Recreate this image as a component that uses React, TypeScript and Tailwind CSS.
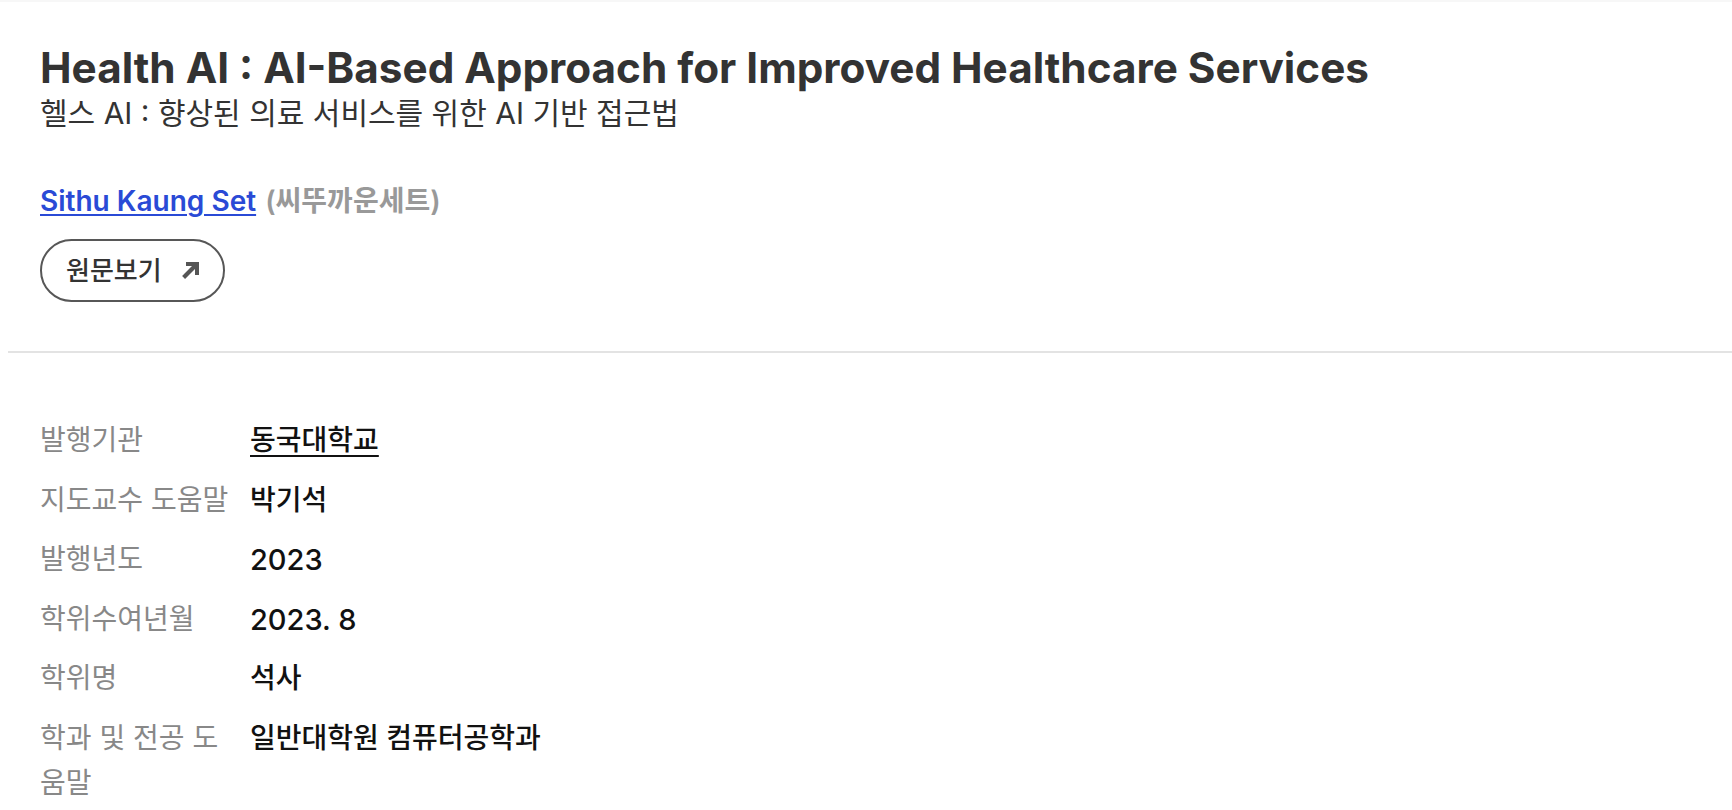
import React from "react";

const FONT = "font-['Inter','Noto_Sans_CJK_KR',sans-serif]";

function ArrowIcon() {
  return (
    <svg width="17" height="17" viewBox="0 0 17 17" fill="none" aria-hidden="true">
      <path d="M4 0H17V13H13V4H4Z" fill="#555" />
      <path d="M1.6 15.4L14.2 2.8" stroke="#555" strokeWidth="4.2" />
    </svg>
  );
}

const rows: { label: string; value: string; cls?: string; underline?: boolean }[] = [
  { label: "발행기관", value: "동국대학교", underline: true },
  { label: "지도교수 도움말", value: "박기석" },
  { label: "발행년도", value: "2023", cls: "text-[29px]" },
  { label: "학위수여년월", value: "2023. 8", cls: "text-[29px]" },
  { label: "학위명", value: "석사" },
  { label: "학과 및 전공 도움말", value: "일반대학원 컴퓨터공학과" },
];

export default function App() {
  return (
    <div className={`min-h-screen bg-white ${FONT}`}>
      <div className="h-[2px] bg-[#f7f7f7]" />
      <div className="pl-[40px] pt-[44px]">
        <h1 className="text-[42.25px] leading-[44px] font-bold text-[#333]">
          Health AI : AI-Based Approach for Improved Healthcare Services
        </h1>
        <p className="mt-[8px] text-[30px] leading-[30px] text-[#333]">
          헬스 AI : 향상된 의료 서비스를 위한 AI 기반 접근법
        </p>
        <div className="mt-[53px] text-[28px] leading-[40px] font-semibold">
          <a href="#" className="text-[#2a4ad6] underline underline-offset-[3px] decoration-[2px]">
            Sithu Kaung Set
          </a>{" "}
          <span className="text-[#999] ml-[2px]">(씨뚜까운세트)</span>
        </div>
        <button className="mt-[18px] inline-flex items-center h-[63px] pl-[24px] pr-[24px] gap-[20px] border-2 border-[#575757] rounded-full bg-white">
          <span className="text-[26px] leading-[30px] font-medium text-[#333]">원문보기</span>
          <ArrowIcon />
        </button>
      </div>
      <div className="mt-[49px] ml-[8px] h-[2px] bg-[#e3e3e3]" />
      <div className="pl-[40px] pt-[65px] flex flex-col gap-[14.6px]">
        {rows.map((r) => (
          <div key={r.label} className="flex items-start">
            <div className="w-[195px] shrink-0 text-[28px] leading-[45px] text-[#888]">
              {r.label}
            </div>
            <div
              className={`ml-[15px] text-[28px] leading-[45px] font-medium text-[#111] ${r.cls ?? ""} ${
                r.underline ? "underline underline-offset-[5px] decoration-[2px]" : ""
              }`}
            >
              {r.value}
            </div>
          </div>
        ))}
      </div>
    </div>
  );
}
